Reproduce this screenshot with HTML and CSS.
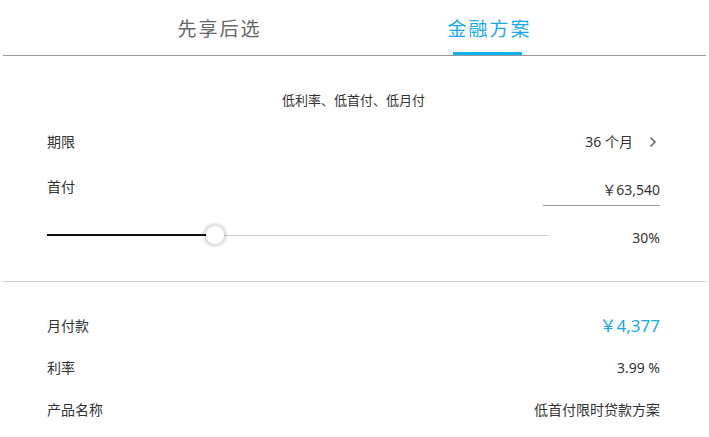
FILE: index.html
```html
<!DOCTYPE html>
<html lang="zh-CN">
<head>
<meta charset="utf-8">
<title>金融方案</title>
<link rel="stylesheet" href="styles.css">
</head>
<body>
<div class="page">
  <nav class="tabs">
    <div class="tab">先享后选</div>
    <div class="tab active">金融方案</div>
  </nav>
  <section class="calc">
    <div class="sub">低利率、低首付、低月付</div>
    <div class="row term">
      <span class="label">期限</span>
      <span class="value">36 个月<svg class="chev" width="8" height="12" viewBox="0 0 8 12"><polyline points="1.5,1.5 6,6 1.5,10.5" fill="none" stroke="#666" stroke-width="1.5"/></svg></span>
    </div>
    <div class="row down">
      <span class="label">首付</span>
      <span class="input">￥63,540</span>
    </div>
    <div class="row slider-row">
      <div class="slider">
        <div class="fill" style="width:33.6%"></div>
        <div class="thumb" style="left:33.6%"></div>
      </div>
      <span class="pct">30%</span>
    </div>
  </section>
  <section class="result">
    <div class="row first">
      <span class="label">月付款</span>
      <span class="value big">￥4,377</span>
    </div>
    <div class="row">
      <span class="label">利率</span>
      <span class="value">3.99 %</span>
    </div>
    <div class="row">
      <span class="label">产品名称</span>
      <span class="value">低首付限时贷款方案</span>
    </div>
  </section>
</div>
</body>
</html>
```

FILE: styles.css
```css
html, body {
  margin: 0;
  padding: 0;
  background: #fff;
}
body {
  font-family: "Noto Sans", "Noto Sans CJK SC", sans-serif;
  color: #333;
  font-size: 14px;
}
.page {
  margin: 0 3px;
}
.tabs {
  display: flex;
  justify-content: center;
  height: 55px;
  border-bottom: 1px solid #999;
}
.tab {
  width: 270px;
  text-align: center;
  font-size: 19px;
  letter-spacing: 2px;
  color: #666;
  line-height: 24px;
  padding-top: 17px;
  position: relative;
}
.tab.active {
  color: #19aaeb;
}
.tab.active::after {
  content: "";
  position: absolute;
  left: 50%;
  bottom: 0;
  width: 69px;
  margin-left: -37px;
  height: 3px;
  background: #13b0f0;
}
.calc {
  padding: 34px 46px 0 44px;
  height: 191px;
  border-bottom: 1px solid #d2d2d2;
}
.sub {
  text-align: center;
  font-size: 13px;
  line-height: 20px;
}
.row {
  display: flex;
  justify-content: space-between;
  align-items: flex-start;
  line-height: 20px;
  font-size: 14px;
}
.term {
  margin-top: 22px;
}
.value {
  display: flex;
  align-items: center;
}
.chev {
  margin-left: 16px;
  margin-right: 3px;
}
.down {
  margin-top: 25px;
}
.input {
  width: 117px;
  text-align: right;
  padding-top: 3px;
  padding-bottom: 5px;
  border-bottom: 1px solid #999;
}
.slider-row {
  margin-top: 19px;
  align-items: flex-start;
}
.slider {
  position: relative;
  width: 501px;
  height: 20px;
}
.slider::before {
  content: "";
  position: absolute;
  left: 0;
  right: 0;
  top: 10px;
  height: 1px;
  background: #ccc;
}
.fill {
  position: absolute;
  left: 0;
  top: 9px;
  height: 2px;
  background: #111;
}
.thumb {
  position: absolute;
  top: 1px;
  width: 18px;
  height: 18px;
  margin-left: -9px;
  border-radius: 50%;
  background: #fff;
  box-shadow: 0 0 2px 3px rgba(0,0,0,0.12);
}
.pct {
  padding-top: 3px;
}
.result {
  padding: 34px 46px 0 44px;
}
.result .row + .row {
  margin-top: 22px;
}
.big {
  font-size: 17px;
  color: #19aaeb;
}
```
